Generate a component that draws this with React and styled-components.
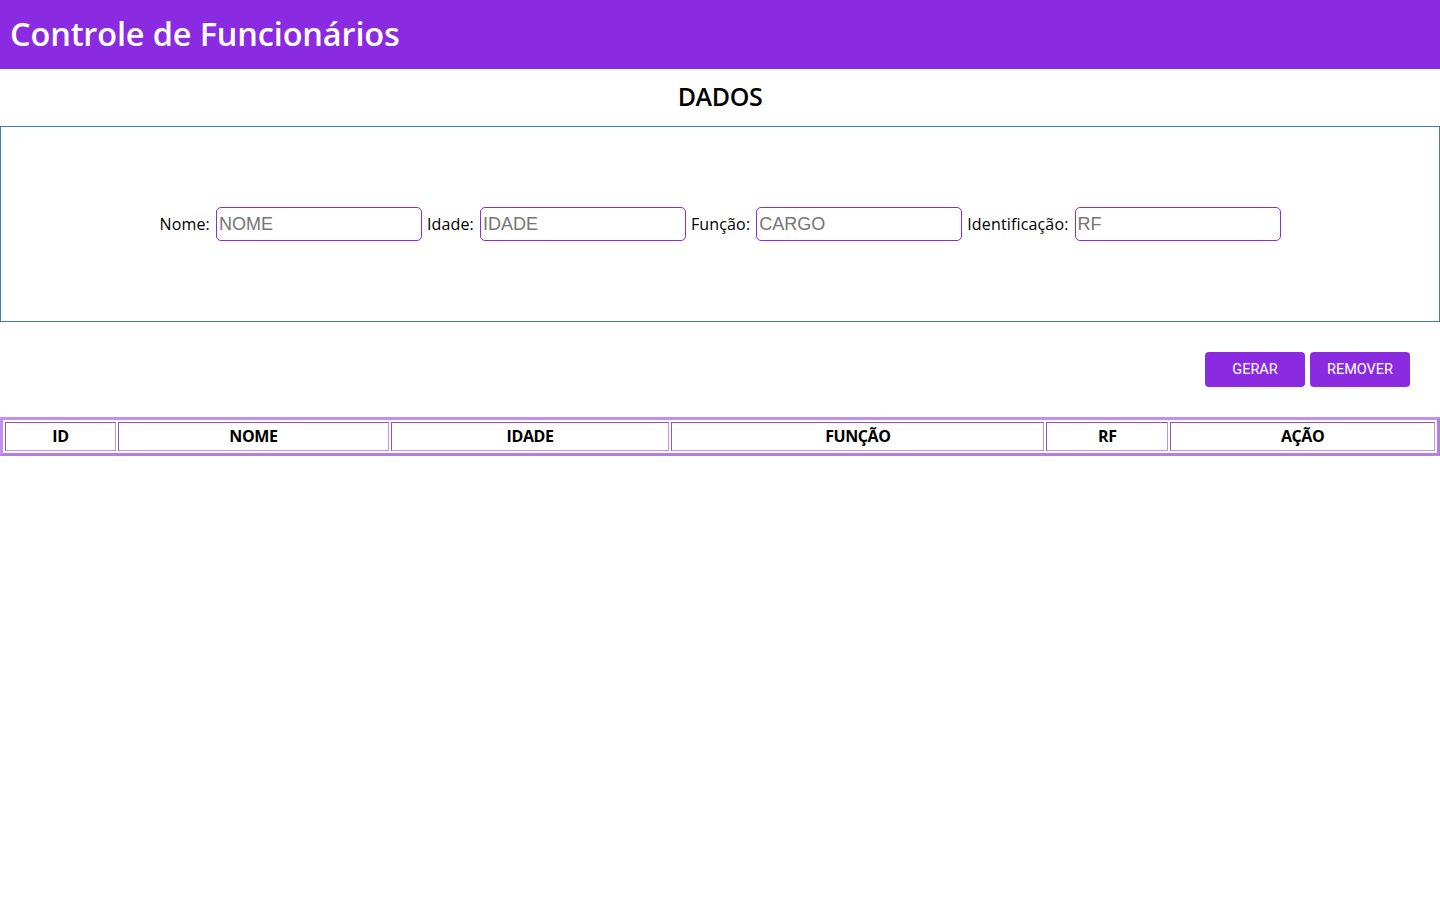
import styled, { createGlobalStyle } from 'styled-components'

const GlobalStyle = createGlobalStyle`
    body {
        margin: 0;
        font-family: "Open Sans", "Noto Sans", sans-serif;
        background: #fff;
        color: #000;
    }
`
const Header = styled.header`
    height: 69px;
    background-color: #8a2be2;
    display: flex;
    align-items: center;
    padding-left: 10px;
    padding-bottom: 3px;
    box-sizing: border-box;
`
const Title = styled.h1`
    margin: 0;
    color: #fff;
    font-size: 32.5px;
    font-weight: 600;
    letter-spacing: -0.15px;
`
const SectionTitle = styled.h2`
    margin: 0;
    height: 57px;
    padding-bottom: 3px;
    box-sizing: border-box;
    display: flex;
    align-items: center;
    justify-content: center;
    font-size: 25px;
    font-weight: 600;
    letter-spacing: -0.4px;
`
const FormBox = styled.div`
    height: 194px;
    border: 1px solid #3a7fb8;
    display: flex;
    align-items: center;
    justify-content: center;
    gap: 5px;
`
const Field = styled.label`
    display: flex;
    align-items: center;
    font-size: 16px;
    letter-spacing: 0.15px;
    span {
        margin-right: 6px;
    }
`
const Input = styled.input`
    width: 206px;
    height: 34px;
    box-sizing: border-box;
    border: 1px solid #8a2be2;
    border-radius: 5px;
    padding: 0 2px;
    font-family: "Liberation Sans", Arial, sans-serif;
    font-size: 18px;
    letter-spacing: 0;
    outline: none;
    &::placeholder {
        color: #757575;
    }
`
const ButtonRow = styled.div`
    display: flex;
    justify-content: flex-end;
    gap: 5px;
    padding: 30px 30px 30px 0;
`
const Button = styled.button`
    width: 100px;
    height: 35px;
    border: none;
    border-radius: 4px;
    background-color: #8a2be2;
    color: #fff;
    font-family: Roboto, sans-serif;
    font-size: 14.5px;
    padding: 0;
    cursor: pointer;
`
const Table = styled.table`
    width: 100%;
    border-spacing: 2px;
    border-style: solid;
    border-width: 3px;
    border-color: #c390f1 #b27fe0 #b27fe0 #c390f1;
`
const Th = styled.th`
    height: 26px;
    padding: 0 0 1px;
    width: ${props => props.w};
    border-style: solid;
    border-width: 1px;
    border-color: #9054c8 #c390f1 #c390f1 #9054c8;
    font-size: 16px;
    font-weight: 700;
    letter-spacing: -0.4px;
`

const columns = [
    ['ID', '110px'],
    ['NOME', '271px'],
    ['IDADE', '279px'],
    ['FUNÇÃO', '374px'],
    ['RF', '121px'],
    ['AÇÃO', '265px'],
]

const fields = [
    ['Nome:', 'NOME'],
    ['Idade:', 'IDADE'],
    ['Função:', 'CARGO'],
    ['Identificação:', 'RF'],
]

const App = () => {
    return (
        <>
            <GlobalStyle />
            <Header>
                <Title>Controle de Funcionários</Title>
            </Header>
            <SectionTitle>DADOS</SectionTitle>
            <FormBox>
                {fields.map(([label, ph]) => (
                    <Field key={label}>
                        <span>{label}</span>
                        <Input placeholder={ph} />
                    </Field>
                ))}
            </FormBox>
            <ButtonRow>
                <Button>GERAR</Button>
                <Button>REMOVER</Button>
            </ButtonRow>
            <Table>
                <thead>
                    <tr>
                        {columns.map(([name, w]) => (
                            <Th key={name} w={w}>{name}</Th>
                        ))}
                    </tr>
                </thead>
            </Table>
        </>
    )
}

export default App
